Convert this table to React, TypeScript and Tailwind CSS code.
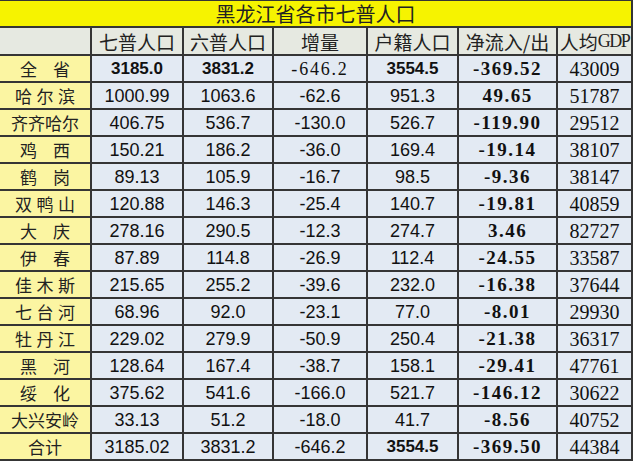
const cjk = "font-['Noto_Sans_CJK_SC',sans-serif]";
const sans = "font-['Liberation_Sans',Arial,sans-serif]";
const serif = "font-['Liberation_Serif','Times_New_Roman',serif]";

type Row = [string, string, string, string, string, string, string];

const rows: Row[] = [
  ["全省", "3185.0", "3831.2", "-646.2", "3554.5", "-369.52", "43009"],
  ["哈尔滨", "1000.99", "1063.6", "-62.6", "951.3", "49.65", "51787"],
  ["齐齐哈尔", "406.75", "536.7", "-130.0", "526.7", "-119.90", "29512"],
  ["鸡西", "150.21", "186.2", "-36.0", "169.4", "-19.14", "38107"],
  ["鹤岗", "89.13", "105.9", "-16.7", "98.5", "-9.36", "38147"],
  ["双鸭山", "120.88", "146.3", "-25.4", "140.7", "-19.81", "40859"],
  ["大庆", "278.16", "290.5", "-12.3", "274.7", "3.46", "82727"],
  ["伊春", "87.89", "114.8", "-26.9", "112.4", "-24.55", "33587"],
  ["佳木斯", "215.65", "255.2", "-39.6", "232.0", "-16.38", "37644"],
  ["七台河", "68.96", "92.0", "-23.1", "77.0", "-8.01", "29930"],
  ["牡丹江", "229.02", "279.9", "-50.9", "250.4", "-21.38", "36317"],
  ["黑河", "128.64", "167.4", "-38.7", "158.1", "-29.41", "47761"],
  ["绥化", "375.62", "541.6", "-166.0", "521.7", "-146.12", "30622"],
  ["大兴安岭", "33.13", "51.2", "-18.0", "41.7", "-8.56", "40752"],
  ["合计", "3185.02", "3831.2", "-646.2", "3554.5", "-369.50", "44384"],
];

const headers = ["七普人口", "六普人口", "增量", "户籍人口", "净流入/出"];

function CityName({ name }: { name: string }) {
  const chars = name.split("");
  if (name === "合计" || chars.length >= 4) {
    return <span>{name}</span>;
  }
  return (
    <span
      className={
        chars.length === 2
          ? "flex w-[50px] justify-between"
          : "flex w-[60px] justify-between"
      }
    >
      {chars.map((c, i) => (
        <span key={i}>{c}</span>
      ))}
    </span>
  );
}

function valueClass(col: number, first: boolean, last: boolean) {
  if (col === 5) return `${serif} text-[19px] font-bold tracking-[1.5px]`;
  if (col === 6) return `${serif} text-[20px]`;
  if (col === 3 && first) return `${serif} text-[18px] tracking-[1.8px]`;
  if (col === 4 && (first || last)) return `${sans} text-[17px] font-bold`;
  if (first) return `${sans} text-[17px] font-bold`;
  return `${sans} text-[18px]`;
}

export default function App() {
  return (
    <div className="h-[461px] w-[640px] overflow-hidden bg-white">
      <div className="grid w-[633px] grid-cols-[90px_90px_88px_92px_89px_97px_73px] grid-rows-[25px_26px_repeat(15,25px)] gap-[2px] bg-[#353535] pt-[1px] pr-[2px] pb-[2px] text-[#111]">
        <div
          className={`${cjk} col-span-7 flex items-center justify-center bg-[#f6f300] text-[20px] leading-none text-[#222]`}
        >
          黑龙江省各市七普人口
        </div>

        <div className="bg-[#e6e9e1]" />
        {headers.map((h) => (
          <div
            key={h}
            className={`${cjk} flex items-center justify-center bg-[#e6e9e1] text-[19px] leading-none text-[#222]`}
          >
            {h}
          </div>
        ))}
        <div
          className={`${cjk} flex items-center justify-center bg-[#e6e9e1] text-[19px] leading-none text-[#222]`}
        >
          人均
          <span className={`${serif} tracking-[-1.5px] text-[18px]`}>GDP</span>
        </div>

        {rows.map((r, ri) => {
          const first = ri === 0;
          const last = ri === rows.length - 1;
          return [
            <div
              key={`${ri}-name`}
              className={`${cjk} flex items-center justify-center bg-[#fbf5a2] text-[17px] leading-none text-[#222]`}
            >
              <CityName name={r[0]} />
            </div>,
            ...r.slice(1).map((v, ci) => (
              <div
                key={`${ri}-${ci}`}
                className={`${valueClass(ci + 1, first, last)} flex items-center justify-center bg-[#e3eaf3] leading-none`}
              >
                {v}
              </div>
            )),
          ];
        })}
      </div>
    </div>
  );
}
